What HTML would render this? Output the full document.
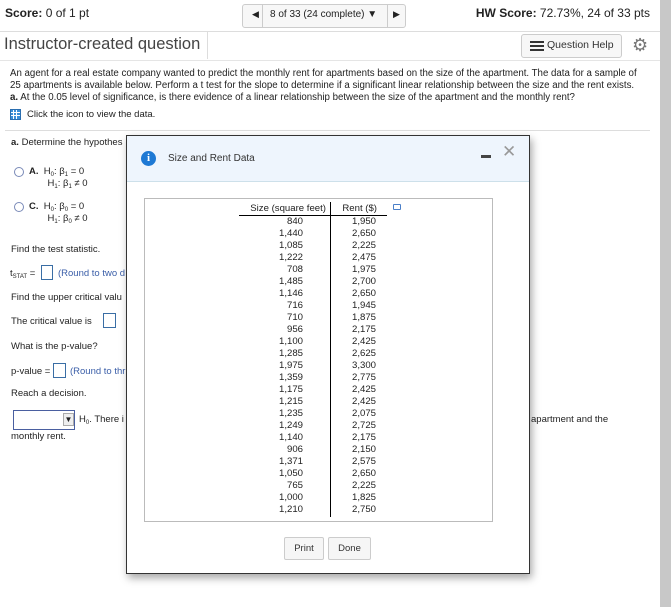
<!DOCTYPE html>
<html><head><meta charset="utf-8"><style>
*{margin:0;padding:0;box-sizing:border-box}
body{width:671px;height:607px;position:relative;overflow:hidden;background:#fff;font-family:"Liberation Sans",Arial,sans-serif;color:#222}
.a{position:absolute;white-space:nowrap}
.s{font-size:9.5px}
.box{position:absolute;border:1px solid #3a6ea5;background:#fff}
.rad{position:absolute;width:10px;height:10px;border:1px solid #7a8ab8;border-radius:50%}
sub{font-size:6px;vertical-align:-2px;line-height:0}
.col div{height:12px;line-height:12px}
</style></head><body>
<div class="a" style="left:5px;top:6px;font-size:12px"><b>Score:</b> 0 of 1 pt</div>
<div class="a" style="left:242px;top:4px;width:164px;height:24px;border:1px solid #ccc;border-radius:3px;background:#f7f7f7"></div>
<div class="a" style="left:262px;top:4px;width:1px;height:24px;background:#ccc"></div>
<div class="a" style="left:387px;top:4px;width:1px;height:24px;background:#ccc"></div>
<div class="a" style="left:252px;top:9px;font-size:9px">◀</div>
<div class="a" style="left:270px;top:9px;font-size:10px">8 of 33 (24 complete) ▼</div>
<div class="a" style="left:393px;top:9px;font-size:9px">▶</div>
<div class="a" style="right:21px;top:6px;font-size:12px"><b>HW Score:</b> 72.73%, 24 of 33 pts</div>
<div class="a" style="left:0;top:31px;width:660px;height:1px;background:#ddd"></div>
<div class="a" style="left:4px;top:35px;font-size:16.5px;color:#444">Instructor-created question</div>
<div class="a" style="left:207px;top:32px;width:1px;height:27px;background:#ddd"></div>
<div class="a" style="left:521px;top:34px;width:101px;height:24px;border:1px solid #ccc;border-radius:3px;background:#f7f7f7"></div>
<div class="a" style="left:530px;top:41px;width:14px;height:2px;background:#333;box-shadow:0 4px #333,0 8px #333"></div>
<div class="a" style="left:547px;top:39px;font-size:10.5px;color:#333">Question Help</div>
<div class="a" style="left:632px;top:35px;font-size:18px;color:#777">⚙</div>
<div class="a" style="left:0;top:60px;width:660px;height:1px;background:#e5e5e5"></div>
<div class="a" style="left:10px;top:68px;line-height:12px;font-size:9.7px">An agent for a real estate company wanted to predict the monthly rent for apartments based on the size of the apartment. The data for a sample of<br>25 apartments is available below. Perform a t test for the slope to determine if a significant linear relationship between the size and the rent exists.<br><b>a.</b> At the 0.05 level of significance, is there evidence of a linear relationship between the size of the apartment and the monthly rent?</div>
<div class="a" style="left:10px;top:109px;width:11px;height:11px;background:#3b8fd8;border:1px solid #2a6eb0;background-image:linear-gradient(#fff 0 0),linear-gradient(#fff 0 0),linear-gradient(#fff 0 0),linear-gradient(#fff 0 0);background-size:1px 100%,1px 100%,100% 1px,100% 1px;background-position:2px 0,5px 0,0 2px,0 5px;background-repeat:no-repeat"></div>
<div class="a s" style="left:27px;top:109px">Click the icon to view the data.</div>
<div class="a" style="left:5px;top:130px;width:645px;height:1px;background:#ddd"></div>
<div class="a s" style="left:11px;top:137px"><b>a.</b> Determine the hypothes</div>
<div class="rad" style="left:14px;top:167px"></div>
<div class="a s" style="left:29px;top:166px;line-height:12px"><b>A.</b>&nbsp; H<sub>0</sub>: β<sub>1</sub> = 0<br>&nbsp;&nbsp;&nbsp;&nbsp;&nbsp;&nbsp; H<sub>1</sub>: β<sub>1</sub> ≠ 0</div>
<div class="rad" style="left:14px;top:202px"></div>
<div class="a s" style="left:29px;top:201px;line-height:12px"><b>C.</b>&nbsp; H<sub>0</sub>: β<sub>0</sub> = 0<br>&nbsp;&nbsp;&nbsp;&nbsp;&nbsp;&nbsp; H<sub>1</sub>: β<sub>0</sub> ≠ 0</div>
<div class="a s" style="left:11px;top:244px">Find the test statistic.</div>
<div class="a s" style="left:10px;top:268px">t<sub>STAT</sub> =</div>
<div class="box" style="left:41px;top:265px;width:12px;height:15px"></div>
<div class="a s" style="left:58px;top:268px;color:#3a5ea8">(Round to two d</div>
<div class="a s" style="left:11px;top:292px">Find the upper critical valu</div>
<div class="a s" style="left:11px;top:316px">The critical value is</div>
<div class="box" style="left:103px;top:313px;width:13px;height:15px"></div>
<div class="a s" style="left:11px;top:341px">What is the p-value?</div>
<div class="a s" style="left:11px;top:366px">p-value =</div>
<div class="box" style="left:53px;top:363px;width:13px;height:15px"></div>
<div class="a s" style="left:70px;top:366px;color:#3a5ea8">(Round to thr</div>
<div class="a s" style="left:11px;top:388px">Reach a decision.</div>
<div class="box" style="left:13px;top:410px;width:62px;height:20px;border-color:#4a5fa0"></div>
<div class="a" style="left:63px;top:413px;width:11px;height:13px;background:#eee;border:1px solid #aaa;font-size:8px;text-align:center;line-height:12px">▼</div>
<div class="a s" style="left:79px;top:414px">H<sub>0</sub>. There i</div>
<div class="a s" style="left:11px;top:431px">monthly rent.</div>
<div class="a s" style="left:531px;top:414px">apartment and the</div>
<div class="a" style="left:660px;top:0;width:11px;height:607px;background:#c8c8c8"></div>
<div class="a" style="left:126px;top:135px;width:404px;height:439px;border:1px solid #333;background:#fff;box-shadow:2px 4px 8px rgba(0,0,0,.35)">
 <div class="a" style="left:0;top:0;width:402px;height:46px;background:#eef5fd;border-bottom:1px solid #cde0ea"></div>
 <div class="a" style="left:14px;top:15px;width:15px;height:15px;border-radius:50%;background:#1e79d4;color:#fff;font:bold 11px 'Liberation Serif',serif;text-align:center;line-height:15px">i</div>
 <div class="a" style="left:41px;top:17px;font-size:10px;color:#333">Size and Rent Data</div>
 <div class="a" style="left:354px;top:19px;width:10px;height:3px;background:#444"></div>
 <div class="a" style="left:375px;top:6px;font-size:17px;color:#999;font-weight:100">✕</div>
 <div class="a" style="left:17px;top:62px;width:349px;height:324px;border:1px solid #bbb"></div>
 <div class="a" style="left:112px;top:67px;width:91px;border-bottom:1px solid #000;text-align:right;font-size:9.6px;line-height:12px;padding-right:4px">Size (square feet)</div>
 <div class="a" style="left:203px;top:66px;width:1px;height:315px;background:#000"></div>
 <div class="a" style="left:204px;top:67px;width:56px;border-bottom:1px solid #000;font-size:9.6px;line-height:12px;text-align:right;padding-right:10px">Rent ($)</div>
 <div class="a" style="left:266px;top:68px;width:8px;height:6px;border:1px solid #4a7fc8;border-radius:1px"></div>
 <div class="a col" style="left:120px;top:80px;width:56px;text-align:right;font-size:9.6px"><div>840</div><div>1,440</div><div>1,085</div><div>1,222</div><div>708</div><div>1,485</div><div>1,146</div><div>716</div><div>710</div><div>956</div><div>1,100</div><div>1,285</div><div>1,975</div><div>1,359</div><div>1,175</div><div>1,215</div><div>1,235</div><div>1,249</div><div>1,140</div><div>906</div><div>1,371</div><div>1,050</div><div>765</div><div>1,000</div><div>1,210</div></div>
 <div class="a col" style="left:198px;top:80px;width:51px;text-align:right;font-size:9.6px"><div>1,950</div><div>2,650</div><div>2,225</div><div>2,475</div><div>1,975</div><div>2,700</div><div>2,650</div><div>1,945</div><div>1,875</div><div>2,175</div><div>2,425</div><div>2,625</div><div>3,300</div><div>2,775</div><div>2,425</div><div>2,425</div><div>2,075</div><div>2,725</div><div>2,175</div><div>2,150</div><div>2,575</div><div>2,650</div><div>2,225</div><div>1,825</div><div>2,750</div></div>
 <div class="a" style="left:157px;top:401px;width:40px;height:23px;border:1px solid #ccc;border-radius:2px;background:#f6f6f6;font-size:9.5px;text-align:center;line-height:21px;color:#333">Print</div>
 <div class="a" style="left:201px;top:401px;width:43px;height:23px;border:1px solid #ccc;border-radius:2px;background:#f6f6f6;font-size:9.5px;text-align:center;line-height:21px;color:#333">Done</div>
</div>
</body></html>
